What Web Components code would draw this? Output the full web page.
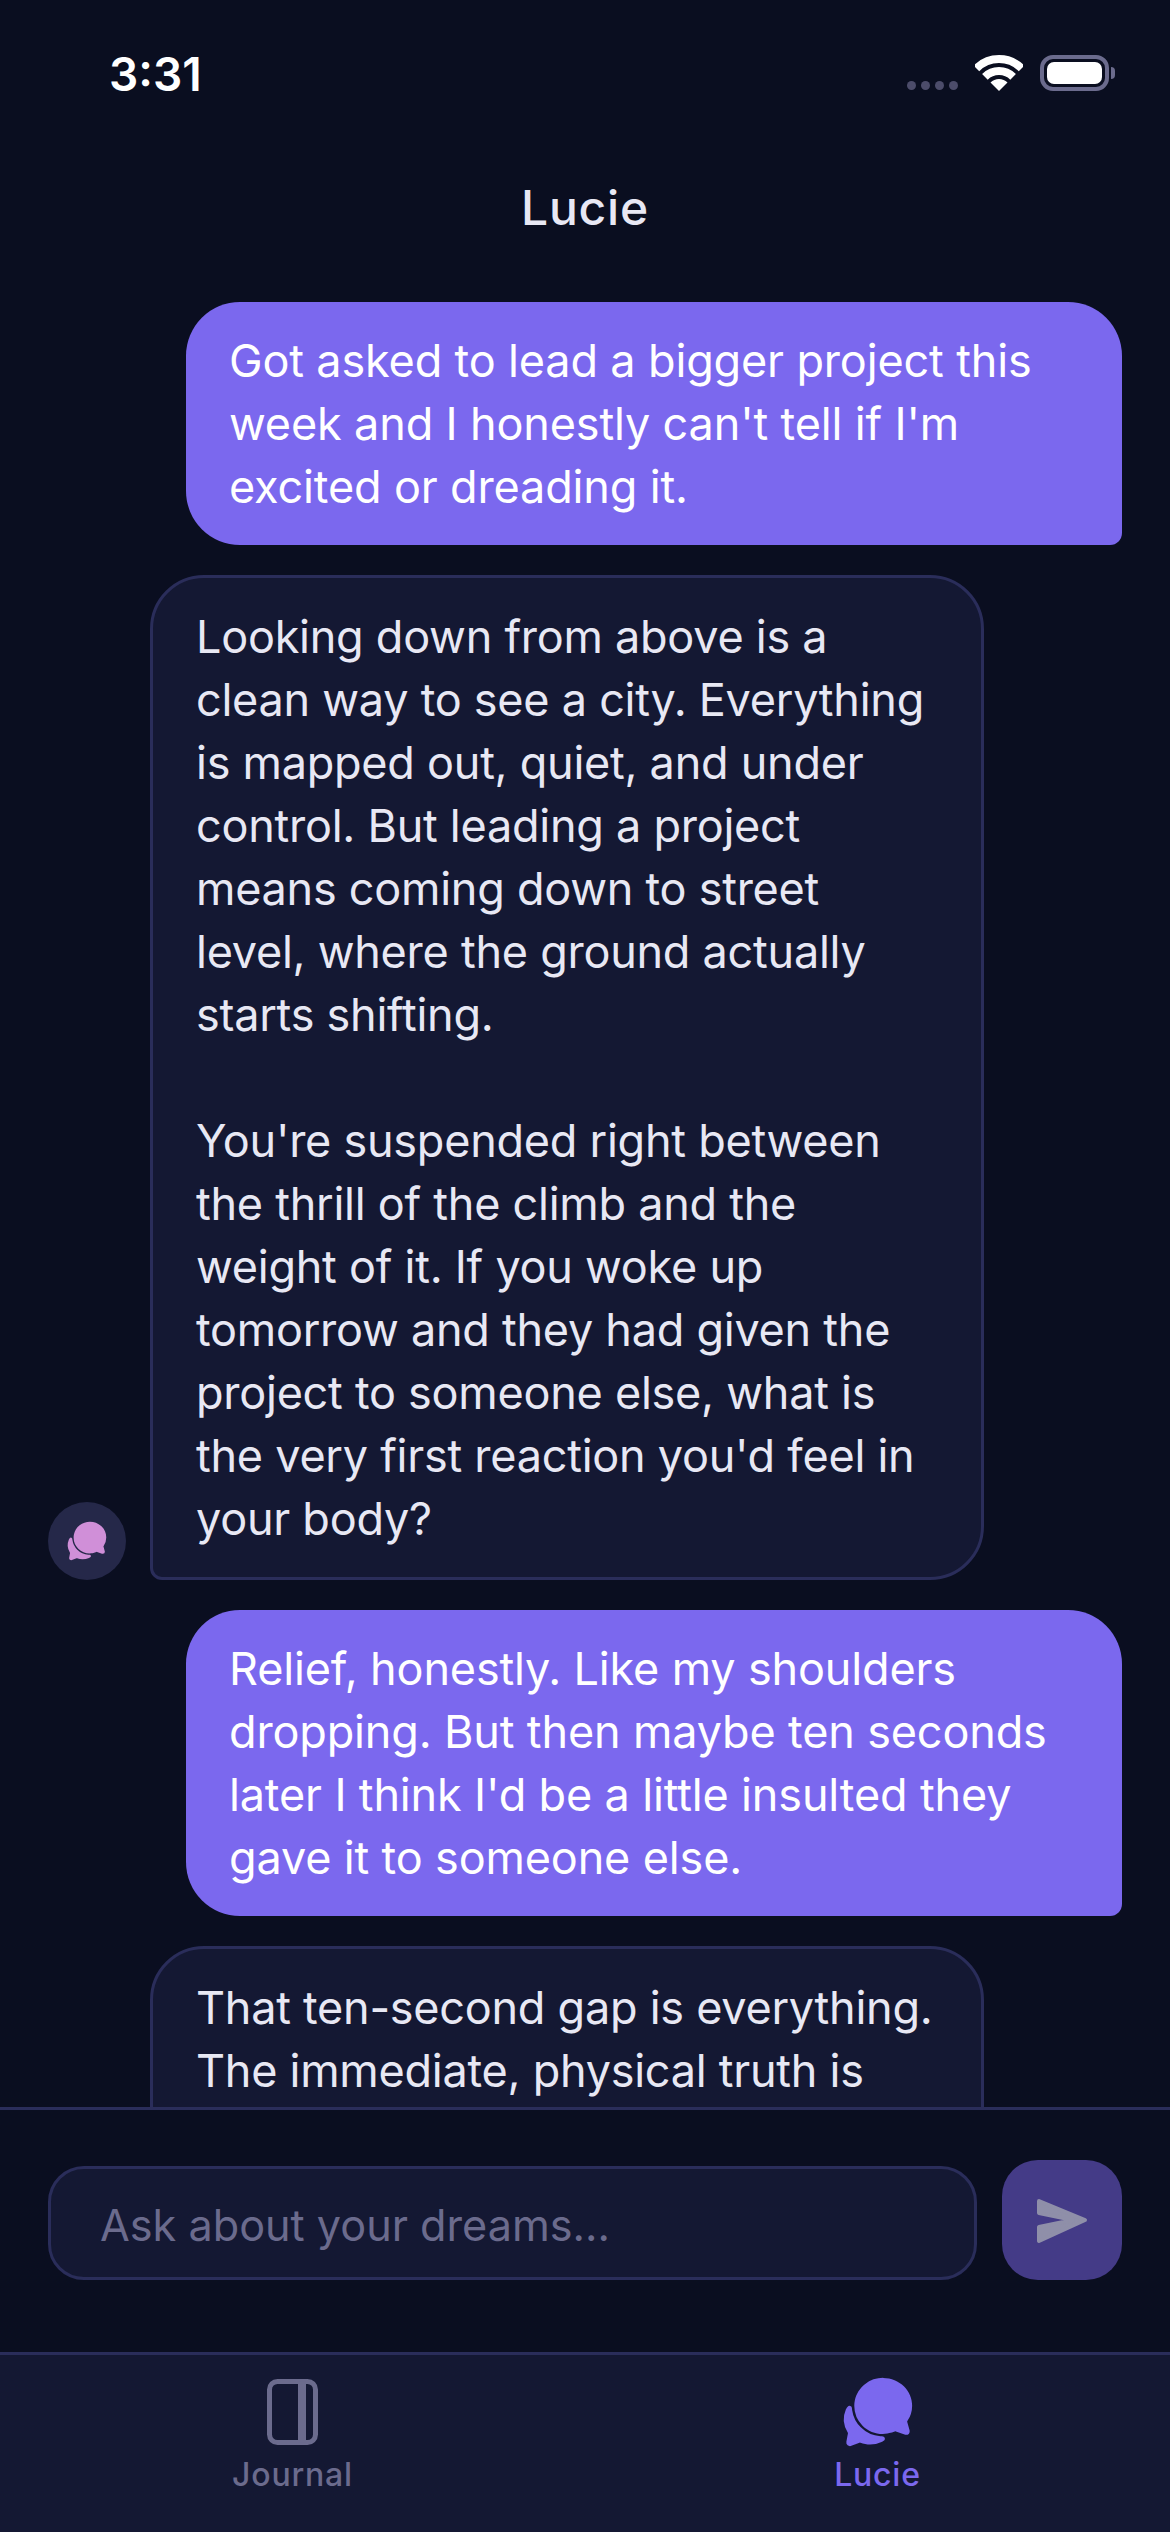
<!DOCTYPE html>
<html lang="en">
<head>
<meta charset="utf-8">
<title>Lucie</title>
<style>
    html, body { margin: 0; padding: 0; background: #0a0e20; }
    body { width: 1170px; height: 2532px; overflow: hidden; font-family: Inter, "Liberation Sans", sans-serif; }
</style>
</head>
<body>
<lucie-app>
    <status-bar slot="status" time="3:31"></status-bar>
    <chat-header slot="header">Lucie</chat-header>
    <chat-thread slot="thread">
        <chat-bubble from="user">Got asked to lead a bigger project this week and I honestly can't tell if I'm excited or dreading it.</chat-bubble>
        <chat-bubble from="lucie" avatar>Looking down from above is a clean way to see a city. Everything is mapped out, quiet, and under control. But leading a project means coming down to street level, where the ground actually starts shifting.<br><br>You're suspended right between the thrill of the climb and the weight of it. If you woke up tomorrow and they had given the project to someone else, what is the very first reaction you'd feel in your body?</chat-bubble>
        <chat-bubble from="user">Relief, honestly. Like my shoulders dropping. But then maybe ten seconds later I think I'd be a little insulted they gave it to someone else.</chat-bubble>
        <chat-bubble from="lucie" cut>That ten-second gap is everything. The immediate, physical truth is</chat-bubble>
    </chat-thread>
    <chat-composer slot="composer" placeholder="Ask about your dreams..."></chat-composer>
    <tab-bar slot="tabs">
        <tab-item icon="journal">Journal</tab-item>
        <tab-item icon="chat" active>Lucie</tab-item>
    </tab-bar>
</lucie-app>

<script>
const bubblesIcon = `
    <path d="M439.9 405.6a26.77 26.77 0 01-9.59-2l-56.78-20.13-.42-.17a9.88 9.88 0 00-3.91-.76 10.32 10.32 0 00-3.62.66c-1.38.52-13.81 5.19-26.85 8.77-7.07 1.94-31.68 8.27-51.43 8.27-50.48 0-97.68-19.4-132.89-54.63A183.38 183.38 0 01100.3 215.1a175.9 175.9 0 014.06-37.58c8.79-40.62 32.07-77.57 65.55-104A194.76 194.76 0 01290.3 32c52.21 0 100.86 20 137 56.18 34.16 34.27 52.88 79.33 52.73 126.87a177.86 177.86 0 01-30.3 99.15l-.19.28-.74 1c-.17.23-.34.45-.5.68l-.15.27a21.63 21.63 0 00-1.08 2.09l15.74 55.94a26.42 26.42 0 011.12 7.11 24 24 0 01-24.03 24.03z"/>
    <path d="M299.87 425.39a15.74 15.74 0 00-10.29-8.1c-5.78-1.53-12.52-1.27-17.67-1.65a201.78 201.78 0 01-128.82-58.75A199.21 199.21 0 0186.4 244.16C85 234.42 85 232 85 232a16 16 0 00-28-10.58s-7.88 8.58-11.6 17.19a162.09 162.09 0 0011 150.06C59 393 59 395 58.42 399.5c-2.73 14.11-7.51 39-10 51.91a24 24 0 008 22.92l.46.39A24.34 24.34 0 0072 480a23.42 23.42 0 009-1.79l53.51-20.65a8.05 8.05 0 015.72 0c21.07 7.84 43 12 63.78 12a176 176 0 0074.91-16.66c5.46-2.56 14-5.34 19-11.12a15 15 0 001.95-16.39z"/>`;

class LucieApp extends HTMLElement {
    constructor() {
        super();
        this.attachShadow({ mode: 'open' });
        this.shadowRoot.innerHTML = `
            <style>
                :host {
                    display: flex;
                    flex-direction: column;
                    width: 1170px;
                    height: 2532px;
                    background: #0a0e20;
                    color: #e8e8f4;
                }
                .thread { flex: 1; min-height: 0; display: flex; flex-direction: column; }
            </style>
            <slot name="status"></slot>
            <slot name="header"></slot>
            <div class="thread"><slot name="thread"></slot></div>
            <slot name="composer"></slot>
            <slot name="tabs"></slot>
        `;
    }
}

class StatusBar extends HTMLElement {
    constructor() {
        super();
        this.attachShadow({ mode: 'open' });
    }

    connectedCallback() {
        this.shadowRoot.innerHTML = `
            <style>
                :host {
                    display: flex;
                    justify-content: space-between;
                    align-items: flex-start;
                    height: 132px;
                    box-sizing: border-box;
                    padding: 47px 55px 0 109px;
                }
                .time {
                    font-size: 46px;
                    line-height: 54px;
                    font-weight: 600;
                    color: #fff;
                }
                .icons { display: flex; align-items: flex-end; padding-top: 8px; }
                .dots { display: flex; gap: 5px; margin-right: 17px; margin-bottom: 1px; }
                .dots i { width: 9px; height: 9px; border-radius: 50%; background: #4c4c6a; }
                .wifi { display: block; margin-right: 17px; }
                .battery {
                    box-sizing: border-box;
                    width: 69px;
                    height: 36px;
                    padding: 3px;
                    border: 4px solid #6b6b8d;
                    border-radius: 13px;
                }
                .battery b { display: block; height: 100%; background: #fff; border-radius: 7px; }
                .nub {
                    width: 4px;
                    height: 12px;
                    margin: 0 0 12px 2px;
                    background: #6b6b8d;
                    border-radius: 0 6px 6px 0;
                }
            </style>
            <span class="time">${this.getAttribute('time')}</span>
            <div class="icons">
                <div class="dots"><i></i><i></i><i></i><i></i></div>
                <svg class="wifi" width="48" height="36" viewBox="0 0 48 36" fill="none" stroke="#fff" stroke-width="8">
                    <path d="M1.4 13.4A32 32 0 0 1 46.6 13.4"/>
                    <path d="M9.9 21.9A20 20 0 0 1 38.1 21.9"/>
                    <path d="M24 36L15.5 27.5A12 12 0 0 1 32.5 27.5Z" fill="#fff" stroke="none"/>
                </svg>
                <div class="battery"><b></b></div>
                <div class="nub"></div>
            </div>
        `;
    }
}

class ChatHeader extends HTMLElement {
    constructor() {
        super();
        this.attachShadow({ mode: 'open' });
        this.shadowRoot.innerHTML = `
            <style>
                :host {
                    display: block;
                    height: 138px;
                    box-sizing: border-box;
                    padding-top: 48px;
                    text-align: center;
                    font-size: 48px;
                    line-height: 56px;
                    font-weight: 500;
                    letter-spacing: 0.8px;
                    color: #e8e8f4;
                }
            </style>
            <slot></slot>
        `;
    }
}

class ChatThread extends HTMLElement {
    constructor() {
        super();
        this.attachShadow({ mode: 'open' });
        this.shadowRoot.innerHTML = `
            <style>
                :host {
                    display: flex;
                    flex-direction: column;
                    flex: 1;
                    min-height: 0;
                    overflow: hidden;
                    box-sizing: border-box;
                    padding: 32px 48px 0;
                    gap: 30px;
                }
            </style>
            <slot></slot>
        `;
    }
}

class ChatBubble extends HTMLElement {
    constructor() {
        super();
        this.attachShadow({ mode: 'open' });
    }

    connectedCallback() {
        const isUser = this.getAttribute('from') === 'user';
        const showAvatar = this.hasAttribute('avatar');
        // the last message runs on under the composer, only its first lines show
        const minHeight = this.hasAttribute('cut') ? 'min-height: 400px;' : '';
        this.shadowRoot.innerHTML = `
            <style>
                :host {
                    display: flex;
                    flex: none;
                    align-items: flex-end;
                    justify-content: ${isUser ? 'flex-end' : 'flex-start'};
                    gap: 24px;
                }
                .avatar {
                    flex: none;
                    width: 78px;
                    height: 78px;
                    border-radius: 50%;
                    background: #252849;
                    display: flex;
                    align-items: center;
                    justify-content: center;
                }
                .spacer { flex: none; width: 78px; }
                .bubble {
                    box-sizing: border-box;
                    font-size: 45px;
                    line-height: 63px;
                    ${minHeight}
                }
                .user {
                    width: 936px;
                    padding: 27px 42px 27px 43px;
                    background: #7b68ee;
                    color: #fff;
                    letter-spacing: -0.15px;
                    border-radius: 54px 54px 12px 54px;
                }
                .lucie {
                    width: 834px;
                    padding: 27px 46px 27px 43px;
                    background: #141833;
                    border: 3px solid #2a2d5a;
                    color: #e8e8f4;
                    letter-spacing: -0.25px;
                    border-radius: 54px 54px 54px 12px;
                }
            </style>
            ${isUser ? '' : showAvatar
                ? `<div class="avatar"><svg width="44" height="44" viewBox="0 0 512 512" fill="#d08fd8">${bubblesIcon}</svg></div>`
                : '<div class="spacer"></div>'}
            <div class="bubble ${isUser ? 'user' : 'lucie'}"><slot></slot></div>
        `;
    }
}

class ChatComposer extends HTMLElement {
    constructor() {
        super();
        this.attachShadow({ mode: 'open' });
    }

    connectedCallback() {
        this.shadowRoot.innerHTML = `
            <style>
                :host {
                    display: flex;
                    align-items: flex-end;
                    gap: 25px;
                    height: 245px;
                    box-sizing: border-box;
                    padding: 50px 48px 0;
                    border-top: 3px solid #2a2d5a;
                }
                .field {
                    flex: 1;
                    height: 114px;
                    box-sizing: border-box;
                    margin-bottom: 72px;
                    padding: 4px 49px 0;
                    display: flex;
                    align-items: center;
                    background: #141833;
                    border: 3px solid #2a2d5a;
                    border-radius: 36px;
                    font-size: 43.2px;
                    color: #6b6b8d;
                }
                .send {
                    flex: none;
                    width: 120px;
                    height: 120px;
                    margin-bottom: 72px;
                    border-radius: 36px;
                    background: #443b87;
                    display: flex;
                    align-items: center;
                    justify-content: center;
                }
            </style>
            <div class="field">${this.getAttribute('placeholder')}</div>
            <div class="send">
                <svg width="54" height="48" viewBox="0 0 54 48" fill="#8f8fa9" stroke="#8f8fa9" stroke-width="4" stroke-linejoin="round">
                    <path d="M4 5L50 24L4 45V31L38 24L4 17Z"/>
                </svg>
            </div>
        `;
    }
}

class TabBar extends HTMLElement {
    constructor() {
        super();
        this.attachShadow({ mode: 'open' });
        this.shadowRoot.innerHTML = `
            <style>
                :host {
                    display: grid;
                    grid-template-columns: 1fr 1fr;
                    height: 180px;
                    box-sizing: border-box;
                    background: #141833;
                    border-top: 3px solid #2a2d5a;
                }
            </style>
            <slot></slot>
        `;
    }
}

class TabItem extends HTMLElement {
    constructor() {
        super();
        this.attachShadow({ mode: 'open' });
    }

    connectedCallback() {
        const color = this.hasAttribute('active') ? '#7b68ee' : '#6b6b8d';
        const icon = this.getAttribute('icon') === 'chat'
            ? `<svg width="78" height="78" viewBox="0 0 512 512" fill="${color}" style="margin:-6px 0">${bubblesIcon}</svg>`
            : `<svg width="51" height="66" viewBox="0 0 51 66" fill="none" stroke="${color}" stroke-width="5">
                    <rect x="2.5" y="2.5" width="46" height="61" rx="8"/>
                    <path d="M35 2.5V63.5" stroke-width="8"/>
               </svg>`;
        this.shadowRoot.innerHTML = `
            <style>
                :host {
                    display: flex;
                    flex-direction: column;
                    align-items: center;
                    padding-top: 24px;
                    color: ${color};
                    font-size: 32px;
                    line-height: 40px;
                    font-weight: 500;
                    letter-spacing: 0.8px;
                }
                .label { margin-top: 10px; }
            </style>
            ${icon}
            <span class="label"><slot></slot></span>
        `;
    }
}

customElements.define('lucie-app', LucieApp);
customElements.define('status-bar', StatusBar);
customElements.define('chat-header', ChatHeader);
customElements.define('chat-thread', ChatThread);
customElements.define('chat-bubble', ChatBubble);
customElements.define('chat-composer', ChatComposer);
customElements.define('tab-bar', TabBar);
customElements.define('tab-item', TabItem);
</script>
</body>
</html>
